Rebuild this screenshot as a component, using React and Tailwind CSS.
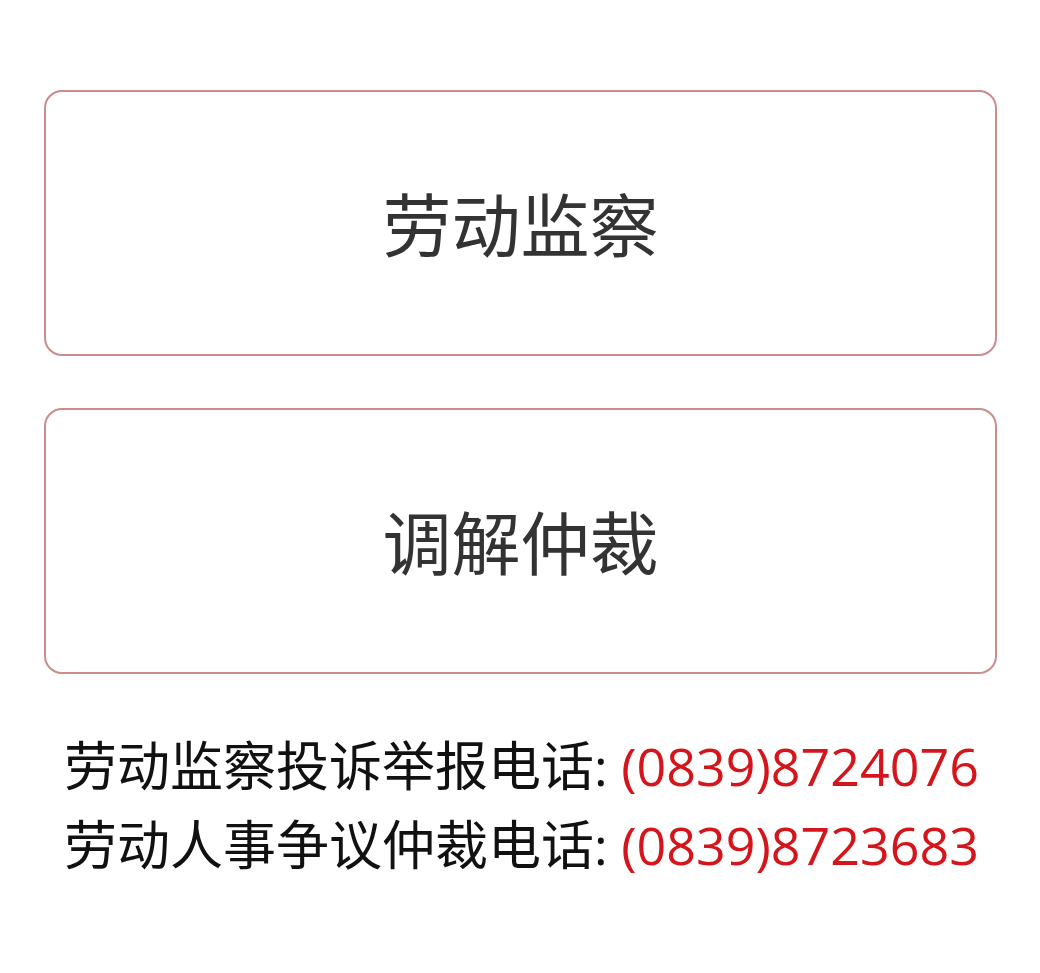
export default function App() {
  return (
    <div className="w-[1040px] h-[973px] bg-white pt-[90px] px-[44px] font-['Noto_Sans_CJK_SC','Noto_Sans',sans-serif]">
      <div className="flex flex-col gap-[52px] w-[953px]">
        <div className="h-[266px] rounded-[18px] border-2 border-[#cd8c8c] flex items-center justify-center text-[69px] text-[#333333]">
          劳动监察
        </div>
        <div className="h-[266px] rounded-[18px] border-2 border-[#cd8c8c] flex items-center justify-center text-[69px] text-[#333333]">
          调解仲裁
        </div>
      </div>
      <div className="mt-[51px] pl-[20px] text-[53px] leading-[77px] text-[#111111] whitespace-nowrap">
        <div>
          劳动监察投诉举报电话
          <span className="font-['Open_Sans',sans-serif] text-[52px]">: </span>
          <span className="font-['Open_Sans',sans-serif] text-[52px] text-[#d4161c]">(0839)8724076</span>
        </div>
        <div>
          劳动人事争议仲裁电话
          <span className="font-['Open_Sans',sans-serif] text-[52px]">: </span>
          <span className="font-['Open_Sans',sans-serif] text-[52px] text-[#d4161c]">(0839)8723683</span>
        </div>
      </div>
    </div>
  );
}
